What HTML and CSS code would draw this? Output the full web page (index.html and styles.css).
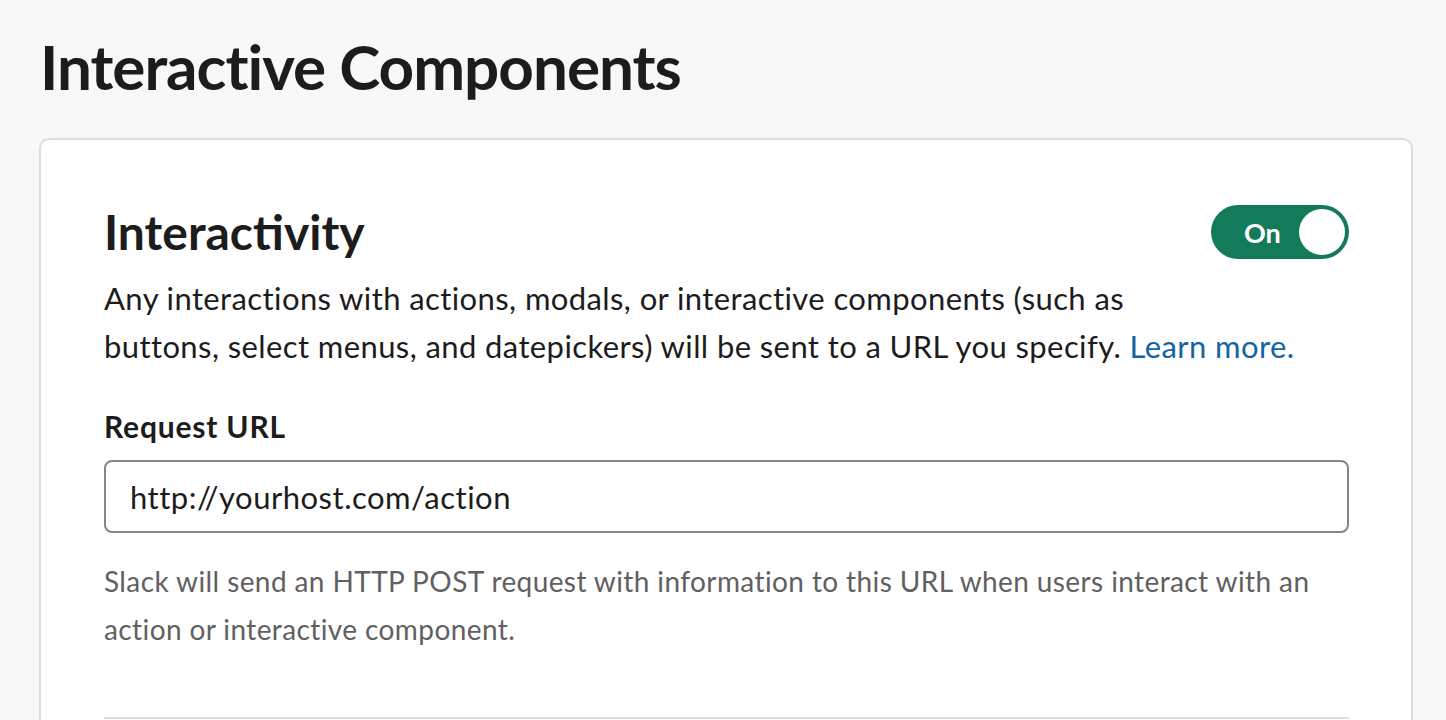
FILE: index.html
```html
<!DOCTYPE html>
<html lang="en">
<head>
<meta charset="utf-8">
<title>Interactive Components</title>
<link rel="stylesheet" href="styles.css">
</head>
<body>
<main class="page">
  <h1 class="page-title">Interactive Components</h1>
  <section class="card">
    <div class="card-head">
      <h2 class="card-title">Interactivity</h2>
      <button class="toggle" type="button" aria-pressed="true">
        <span class="toggle-label">On</span>
        <span class="toggle-knob"></span>
      </button>
    </div>
    <p class="desc">Any interactions with actions, modals, or interactive components (such as<br>buttons, select menus, and datepickers) will be sent to a URL you specify. <a class="link" href="#">Learn more.</a></p>
    <label class="field-label" for="req-url">Request URL</label>
    <input class="field-input" id="req-url" type="text" value="http://yourhost.com/action">
    <p class="help">Slack will send an HTTP POST request with information to this URL when users interact with an action or interactive component.</p>
    <hr class="divider">
  </section>
</main>
</body>
</html>
```

FILE: styles.css
```css
* { box-sizing: border-box; }
html, body {
  margin: 0;
  padding: 0;
  background: #f8f8f8;
  font-family: Lato, "Open Sans", "Liberation Sans", sans-serif;
  color: #1d1c1d;
}
.page {
  padding: 29px 34px 0 39px;
  height: 720px;
  overflow: hidden;
}
.page-title {
  margin: 0 0 35px 1px;
  font-size: 62px;
  font-weight: 700;
  line-height: 74px;
  letter-spacing: -1px;
}
.card {
  width: 1374px;
  background: #fff;
  border: 2px solid #dddddd;
  border-radius: 10px;
  padding: 62px 62px 40px 63px;
}
.card-head {
  display: flex;
  justify-content: space-between;
  align-items: center;
}
.card-title {
  margin: 0;
  font-size: 48px;
  font-weight: 700;
  line-height: 60px;
}
.toggle {
  display: flex;
  align-items: center;
  justify-content: space-between;
  width: 138px;
  height: 54px;
  padding: 0 4px 0 33px;
  border: none;
  border-radius: 27px;
  background: #137a5a;
  cursor: pointer;
}
.toggle-label {
  color: #fff;
  font-family: Lato, sans-serif;
  font-weight: 700;
  font-size: 27px;
}
.toggle-knob {
  width: 46px;
  height: 46px;
  border-radius: 50%;
  background: #fff;
}
.desc {
  margin: 12px 0 0;
  font-size: 31px;
  line-height: 48px;
  letter-spacing: 0.4px;
}
.link {
  color: #1264a3;
  text-decoration: none;
}
.field-label {
  display: block;
  margin-top: 36px;
  font-size: 30px;
  font-weight: 700;
  line-height: 40px;
  letter-spacing: 0.8px;
}
.field-input {
  display: block;
  width: 100%;
  height: 73px;
  margin-top: 14px;
  padding: 0 24px;
  border: 2px solid #868686;
  border-radius: 8px;
  font-family: Lato, sans-serif;
  font-size: 31px;
  letter-spacing: 0.5px;
  color: #1d1c1d;
  background: #fff;
  outline: none;
}
.help {
  margin: 24px 0 0;
  font-size: 28px;
  line-height: 48px;
  letter-spacing: 0.4px;
  color: #616061;
}
.divider {
  margin: 64px 0 0;
  border: none;
  border-top: 2px solid #dddddd;
}
```
